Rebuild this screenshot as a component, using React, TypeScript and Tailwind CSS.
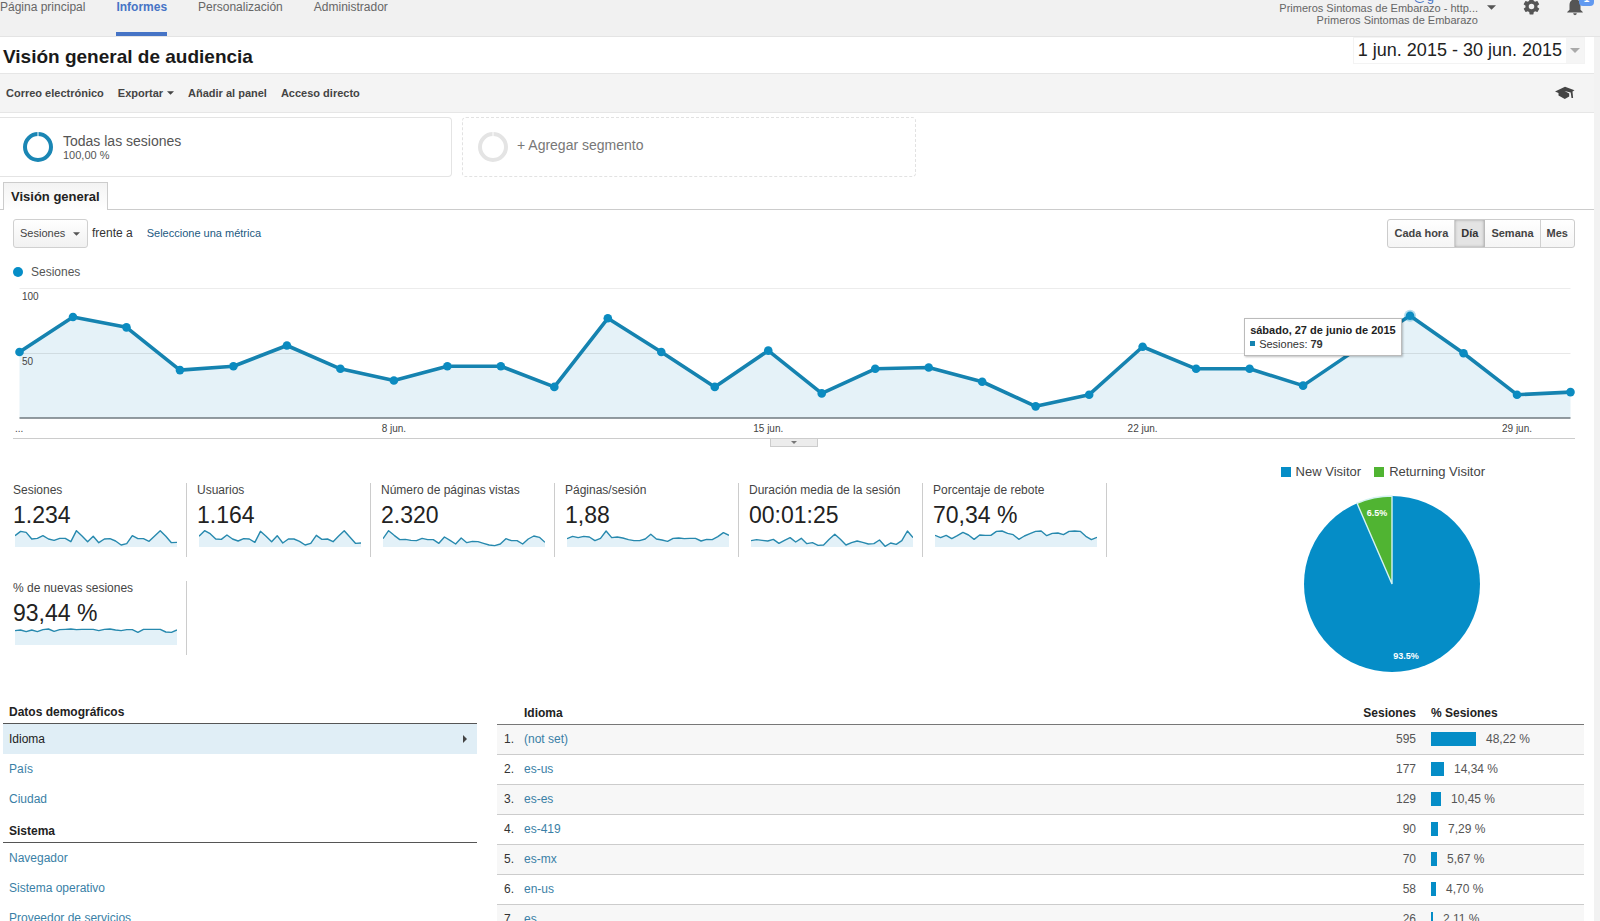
import type { ReactNode } from "react";

const sessions = [
  51, 78, 70, 37, 40, 56, 38, 29, 40, 40, 24, 77, 51, 24, 52, 19, 38, 39, 28, 9, 18, 55, 38, 38, 25, 53, 79, 50, 18, 20,
];

const spark = {
  sessions: [34, 47, 44, 24, 26, 34, 24, 20, 26, 26, 16, 49, 33, 16, 32, 13, 24, 25, 18, 6, 10, 34, 25, 25, 17, 33, 49, 32, 13, 14],
  users: [32, 49, 40, 24, 23, 36, 24, 18, 25, 24, 14, 47, 32, 16, 34, 12, 24, 24, 17, 6, 11, 35, 23, 24, 16, 33, 49, 30, 11, 12],
  views: [25, 49, 35, 22, 23, 20, 19, 26, 22, 22, 11, 30, 20, 9, 27, 13, 17, 16, 11, 6, 4, 9, 25, 19, 19, 9, 24, 33, 29, 14],
  perVisit: [25, 32, 28, 32, 30, 19, 26, 48, 28, 30, 27, 22, 19, 19, 24, 38, 24, 21, 17, 26, 27, 25, 26, 26, 18, 23, 22, 31, 43, 35],
  duration: [19, 22, 20, 18, 23, 11, 20, 28, 15, 26, 10, 13, 5, 6, 23, 38, 23, 6, 13, 18, 14, 9, 10, 21, 2, 12, 8, 19, 48, 28],
  bounce: [35, 28, 35, 25, 34, 44, 36, 23, 36, 35, 35, 47, 48, 41, 37, 23, 33, 40, 47, 48, 34, 41, 42, 37, 47, 48, 47, 32, 22, 29],
  fresh: [43, 45, 40, 45, 40, 46, 48, 41, 46, 47, 48, 46, 47, 47, 47, 43, 47, 48, 45, 43, 46, 46, 38, 47, 47, 47, 47, 39, 38, 45],
};

const metrics = [
  { label: "Sesiones", value: "1.234", data: spark.sessions },
  { label: "Usuarios", value: "1.164", data: spark.users },
  { label: "Número de páginas vistas", value: "2.320", data: spark.views },
  { label: "Páginas/sesión", value: "1,88", data: spark.perVisit },
  { label: "Duración media de la sesión", value: "00:01:25", data: spark.duration },
  { label: "Porcentaje de rebote", value: "70,34 %", data: spark.bounce },
  { label: "% de nuevas sesiones", value: "93,44 %", data: spark.fresh },
];

const languages = [
  { name: "(not set)", count: 595, share: "48,22 %", bar: 45 },
  { name: "es-us", count: 177, share: "14,34 %", bar: 13 },
  { name: "es-es", count: 129, share: "10,45 %", bar: 10 },
  { name: "es-419", count: 90, share: "7,29 %", bar: 7 },
  { name: "es-mx", count: 70, share: "5,67 %", bar: 6 },
  { name: "en-us", count: 58, share: "4,70 %", bar: 5 },
  { name: "es", count: 26, share: "2,11 %", bar: 2 },
];

function Caret({ className }: { className: string }) {
  return (
    <svg viewBox="0 0 8 4" className={className} aria-hidden="true">
      <path d="M0 0h8L4 4z" fill="currentColor" />
    </svg>
  );
}

function Ring({ className }: { className: string }) {
  return (
    <svg viewBox="0 0 30 30" className={className} aria-hidden="true">
      <circle cx="15" cy="15" r="13" fill="none" stroke="currentColor" strokeWidth="4" />
      <path d="M15 0v4" stroke="#fff" strokeWidth="1" />
    </svg>
  );
}

function Sparkline({ data }: { data: number[] }) {
  const points = data.map((v, i) => `${(i * 162) / 29},${18 - v / 3}`).join(" ");
  return (
    <svg viewBox="0 0 162 18" className="ml-[2px] block h-[18px] w-[162px]" aria-hidden="true">
      <polygon points={`0,18 ${points} 162,18`} fill="#e3f1f8" />
      <polyline points={points} fill="none" stroke="#2789ae" strokeWidth="1.4" strokeLinejoin="round" />
    </svg>
  );
}

const px = (i: number) => 6.5 + (i * 1551) / 29;
const py = (v: number) => 132 - v * 1.295;

function SessionsChart() {
  const points = sessions.map((v, i) => `${px(i)},${py(v)}`).join(" ");
  const ticks = [
    { i: 7, text: "8 jun." },
    { i: 14, text: "15 jun." },
    { i: 21, text: "22 jun." },
    { i: 28, text: "29 jun." },
  ];
  return (
    <div className="relative">
      <svg viewBox="0 0 1562 152" className="block h-auto w-full overflow-visible" role="img" aria-label="Sesiones por día">
        <path d="M6.5 2.5H1557.5" stroke="#ececec" />
        <polygon points={`6.5,132 ${points} 1557.5,132`} fill="#e5f2f8" />
        <path d="M6.5 67.5H1557.5" stroke="#000" strokeOpacity="0.09" />
        <path d="M6.5 132H1557.5" stroke="#6f7a80" strokeWidth="1.4" />
        <polyline points={points} fill="none" stroke="#1583b0" strokeWidth="3.6" strokeLinejoin="round" />
        <circle cx={px(26)} cy={py(79)} r="6" fill="#058dc7" fillOpacity="0.3" />
        {sessions.map((v, i) => (
          <circle key={i} cx={px(i)} cy={py(v)} r="4.3" fill="#0b8bc0" />
        ))}
        <g fontSize="10" fill="#444">
          <text x="9" y="14">100</text>
          <text x="9" y="79">50</text>
          <text x="2" y="146">...</text>
          {ticks.map((t) => (
            <text key={t.i} x={px(t.i)} y="146" textAnchor="middle">
              {t.text}
            </text>
          ))}
        </g>
      </svg>
      <div className="absolute top-[21%] right-[11.1%] border border-[#bbb] bg-white px-[5px] py-1 text-[11px] leading-[14px] whitespace-nowrap text-[#333] shadow-[1px_1px_2px_rgba(0,0,0,0.25)]">
        <p className="font-bold text-[#222]">sábado, 27 de junio de 2015</p>
        <p className="flex items-center gap-1">
          <span className="size-[5px] bg-[#1583b0]" />
          <span>
            Sesiones: <b>79</b>
          </span>
        </p>
      </div>
    </div>
  );
}

function VisitorPie() {
  const a = (-23.4 * Math.PI) / 180;
  const x = 89 + 88 * Math.sin(a);
  const y = 89 - 88 * Math.cos(a);
  return (
    <section className="flex flex-col items-end gap-[15px] text-[13px] text-[#444]">
      <div className="flex gap-[13px] leading-[16px]">
        <span className="flex items-center gap-[5px]">
          <span className="size-[10px] bg-[#058dc7]" />
          New Visitor
        </span>
        <span className="flex items-center gap-[5px]">
          <span className="size-[10px] bg-[#50b432]" />
          Returning Visitor
        </span>
      </div>
      <svg viewBox="0 0 178 178" className="mr-1 block size-[178px]" role="img" aria-label="New Visitor y Returning Visitor">
        <circle cx="89" cy="89" r="88" fill="#058dc7" />
        <path d={`M89 89L${x} ${y}A88 88 0 0 1 89 1Z`} fill="#50b432" stroke="#d4f3f2" strokeWidth="1.4" />
        <g fontSize="9" fontWeight="bold" fill="#fff" textAnchor="middle">
          <text x="74" y="21">6.5%</text>
          <text x="103" y="164">93.5%</text>
        </g>
      </svg>
    </section>
  );
}

function NavGroup({ title, children }: { title: string; children: ReactNode }) {
  return (
    <section>
      <h2 className="border-b border-[#555] pt-2 pb-[2px] pl-[6px] text-[12px] leading-[18px] font-bold text-[#222]">{title}</h2>
      <ul className="text-[12px] leading-[30px]">{children}</ul>
    </section>
  );
}

function NavItem({ children }: { children: string }) {
  return (
    <li className="pl-[6px]">
      <a href="#" className="text-[#3a7fa6]">
        {children}
      </a>
    </li>
  );
}

const seg = "h-full border-r border-[#d0d0d0] px-[6px]";

export default function App() {
  return (
    <div className="min-h-screen bg-[#f2f2f2] font-['Liberation_Sans',Arial,sans-serif] text-[#333]">
      <header className="flex h-[37px] items-start justify-between overflow-hidden border-b border-[#e4e4e4] bg-[#f1f1f1]">
        <nav className="flex h-full gap-[31px] text-[12px] leading-[15px] text-[#666]">
          <a href="#">Página principal</a>
          <a href="#" className="border-b-4 border-[#4674c6] font-bold text-[#4674c6]">
            Informes
          </a>
          <a href="#">Personalización</a>
          <a href="#">Administrador</a>
        </nav>
        <div className="flex items-start text-[#555]">
          <div className="relative mt-[2px] mr-[9px] text-right text-[11px] leading-[12px] text-[#666]">
            <a href="#" className="absolute -top-[11px] right-[44px] text-[13px] leading-[12px] text-[#4674c6]">
              @g
            </a>
            <p>Primeros Sintomas de Embarazo - http...</p>
            <p>Primeros Sintomas de Embarazo</p>
          </div>
          <Caret className="mt-[5px] mr-[26px] h-[5px] w-[9px]" />
          <button type="button" aria-label="Configuración" className="-mt-[3px] mr-[23px]">
            <svg viewBox="0 0 24 24" className="size-[19px]" fill="currentColor" aria-hidden="true">
              <path d="M19.4 13a7.5 7.5 0 0 0 0-2l2.1-1.6a.5.5 0 0 0 .1-.6l-2-3.5a.5.5 0 0 0-.6-.2l-2.5 1a7.3 7.3 0 0 0-1.7-1l-.4-2.6a.5.5 0 0 0-.5-.5h-4a.5.5 0 0 0-.5.4L9 5.100a7.300 7.300 0 0 0-1.700 1l-2.500-1a.5.5 0 0 0-.6.2l-2 3.500a.5.5 0 0 0 .1.6L4.500 11a7.500 7.500 0 0 0 0 2l-2.100 1.600a.5.5 0 0 0-.1.6l2 3.500c.1.2.4.3.6.2l2.500-1a7.300 7.300 0 0 0 1.700 1l.4 2.600c0 .3.2.5.5.5h4c.3 0 .5-.2.5-.5l.4-2.600a7.300 7.300 0 0 0 1.700-1l2.500 1c.2.1.5 0 .6-.2l2-3.500a.5.5 0 0 0-.1-.6zM12 15.500a3.500 3.500 0 1 1 0-7 3.500 3.500 0 0 1 0 7z" />
            </svg>
          </button>
          <button type="button" aria-label="Notificaciones" className="relative -mt-[5px] mr-[14px]">
            <svg viewBox="0 0 24 24" className="size-[22px]" fill="currentColor" aria-hidden="true">
              <path d="M12 22a2 2 0 0 0 2-2h-4a2 2 0 0 0 2 2zm6-6v-5c0-3.100-1.600-5.600-4.500-6.300V4a1.500 1.500 0 0 0-3 0v.700C7.600 5.400 6 7.900 6 11v5l-2.500 2.500v.5h17v-.5z" />
            </svg>
            <span className="absolute -top-1 -right-[8px] h-[15px] w-[15px] rounded-sm bg-[#6199f0] text-center text-[10px] leading-[15px] font-bold text-white">
              1
            </span>
          </button>
        </div>
      </header>

      <main className="mr-[6px] bg-white pb-5">
        <div className="flex h-[36px] items-end justify-between pr-[9px] pl-[3px]">
          <h1 className="pb-1 text-[19px] leading-[24px] font-bold text-[#1a1a1a]">Visión general de audiencia</h1>
          <button type="button" className="flex h-[27px] items-stretch self-start border border-[#f3f3f3] text-[18px] leading-[25px] text-[#222]">
            <span className="px-1">1 jun. 2015 - 30 jun. 2015</span>
            <span className="flex w-[18px] items-center justify-center bg-[#f5f5f5] text-[#aaa]">
              <Caret className="h-[5px] w-[10px]" />
            </span>
          </button>
        </div>

        <div className="flex h-[40px] items-center justify-between border-y border-[#e6e6e6] bg-[#f4f4f4] pr-[19px] pl-[6px]">
          <div className="flex gap-[14px] text-[11px] leading-[14px] font-bold text-[#444]">
            <button type="button">Correo electrónico</button>
            <button type="button" className="flex items-center gap-1">
              Exportar <Caret className="h-[4px] w-[7px]" />
            </button>
            <button type="button">Añadir al panel</button>
            <button type="button">Acceso directo</button>
          </div>
          <button type="button" aria-label="Formación" className="text-[#444]">
            <svg viewBox="0 0 20 14" className="h-[14px] w-[20px]" aria-hidden="true">
              <path d="M0 5.500L10 .8l9.500 3.400-2 1.400.6 6.400h-1.600l-.8-5.500-6.200-1.500 4.700 2.600v3L9.800 13 3.500 9.600V7z" fill="currentColor" />
            </svg>
          </button>
        </div>

        <div className="flex gap-[10px] pt-1">
          <div className="flex h-[60px] w-[452px] items-center gap-[10px] rounded-r-sm border border-l-0 border-[#e4e4e4] pl-[23px]">
            <Ring className="size-[30px] text-[#1a86b4]" />
            <div>
              <p className="text-[14px] leading-[16px] text-[#555]">Todas las sesiones</p>
              <p className="text-[11px] leading-[13px] text-[#555]">100,00 %</p>
            </div>
          </div>
          <button type="button" className="flex h-[60px] w-[454px] items-center gap-[9px] rounded-sm border border-dashed border-[#e2e2e2] pl-[15px] text-[14px] leading-[16px] text-[#777]">
            <Ring className="size-[30px] text-[#e4e4e4]" />
            <span className="pb-1">+ Agregar segmento</span>
          </button>
        </div>

        <div className="mt-[5px] flex">
          <span className="w-[3px] border-b border-[#ccc]" />
          <button type="button" className="h-[28px] border border-b-0 border-[#ccc] bg-linear-to-b from-[#f3f3f3] to-white px-[7px] text-[13px] leading-[26px] font-bold text-[#222]">
            Visión general
          </button>
          <span className="flex-1 border-b border-[#ccc]" />
        </div>

        <div className="pr-[19px] pl-[13px]">
          <div className="flex justify-between pt-[9px]">
            <div className="flex h-[29px] items-center text-[11px]">
              <div className="relative h-full">
                <select
                  aria-label="Métrica"
                  className="h-full w-[75px] appearance-none rounded-[3px] border border-[#d0d0d0] bg-linear-to-b from-white to-[#f1f1f1] pl-[6px] text-[11px] text-[#444]"
                >
                  <option>Sesiones</option>
                </select>
                <Caret className="pointer-events-none absolute top-[13px] right-[8px] h-[4px] w-[7px] text-[#555]" />
              </div>
              <span className="ml-1 pb-[2px] text-[12px]">frente a</span>
              <a href="#" className="ml-[14px] text-[#22597f]">
                Seleccione una métrica
              </a>
            </div>
            <div className="flex h-[29px] rounded-[3px] border border-[#ccc] bg-linear-to-b from-white to-[#f5f5f5] text-[11px] font-bold text-[#444]">
              <button type="button" className={seg}>
                Cada hora
              </button>
              <button type="button" className="h-full border-r border-[#bbb] bg-[#e4e4e4] px-[6px] text-[#333] shadow-[inset_0_0_3px_rgba(0,0,0,0.3)]">
                Día
              </button>
              <button type="button" className={seg}>
                Semana
              </button>
              <button type="button" className="h-full px-[6px]">
                Mes
              </button>
            </div>
          </div>

          <div className="flex items-center gap-2 pt-[15px] text-[12px] leading-[18px] text-[#555]">
            <span className="size-[10px] rounded-full bg-[#058dc7]" />
            Sesiones
          </div>

          <div className="pt-[5px]">
            <SessionsChart />
          </div>
          <div className="flex h-[9px] justify-center border-t border-[#ccc]">
            <button type="button" aria-label="Mostrar anotaciones" className="flex h-[8px] w-[48px] items-center justify-center border border-t-0 border-[#ccc] bg-[#ececec] text-[#777]">
              <Caret className="h-[3px] w-[6px]" />
            </button>
          </div>
        </div>

        <div className="flex justify-between pt-[17px] pr-[109px] pl-[13px]">
          <div className="flex max-w-[1110px] flex-wrap content-start gap-x-[10px] gap-y-[24px] pt-[19px]">
            {metrics.map((m) => (
              <div key={m.label} className="h-[74px] w-[174px] border-r border-[#ccc]">
                <p className="text-[12px] leading-[15px] whitespace-nowrap text-[#444]">{m.label}</p>
                <p className="pt-1 text-[23px] leading-[27px] text-[#222]">{m.value}</p>
                <Sparkline data={m.data} />
              </div>
            ))}
          </div>
          <VisitorPie />
        </div>

        <div className="flex gap-[20px] pt-[22px] pr-[10px] pl-[3px]">
          <div className="w-[474px] shrink-0">
            <NavGroup title="Datos demográficos">
              <li className="flex items-center justify-between bg-[#e0eef6] pr-[10px] pl-[6px] text-[#222]">
                Idioma
                <svg viewBox="0 0 4 8" className="h-[8px] w-[4px]" aria-hidden="true">
                  <path d="M0 0l4 4-4 4z" fill="#444" />
                </svg>
              </li>
              <NavItem>País</NavItem>
              <NavItem>Ciudad</NavItem>
            </NavGroup>
            <NavGroup title="Sistema">
              <NavItem>Navegador</NavItem>
              <NavItem>Sistema operativo</NavItem>
              <NavItem>Proveedor de servicios</NavItem>
            </NavGroup>
          </div>
          <table className="w-full border-collapse self-start text-[12px]">
            <thead>
              <tr className="h-[29px] border-b border-[#777] align-bottom leading-[18px] text-[#222]">
                <th className="w-[27px]" />
                <th className="pb-[2px] text-left">Idioma</th>
                <th className="w-[100px] pb-[2px] text-right">Sesiones</th>
                <th className="w-[168px] pb-[2px] pl-[15px] text-left">% Sesiones</th>
              </tr>
            </thead>
            <tbody>
              {languages.map((l, i) => (
                <tr key={l.name} className="h-[30px] border-b border-[#ccc] odd:bg-[#f7f7f7]">
                  <td className="pr-[10px] text-right">{i + 1}.</td>
                  <td>
                    <a href="#" className="text-[#3a7fa6]">
                      {l.name}
                    </a>
                  </td>
                  <td className="text-right text-[#555]">{l.count}</td>
                  <td className="pl-[15px] text-[#555]">
                    <span className="flex items-center gap-[10px]">
                      <span className="h-[14px] bg-[#058dc7]" style={{ width: l.bar }} />
                      {l.share}
                    </span>
                  </td>
                </tr>
              ))}
            </tbody>
          </table>
        </div>
      </main>
    </div>
  );
}
